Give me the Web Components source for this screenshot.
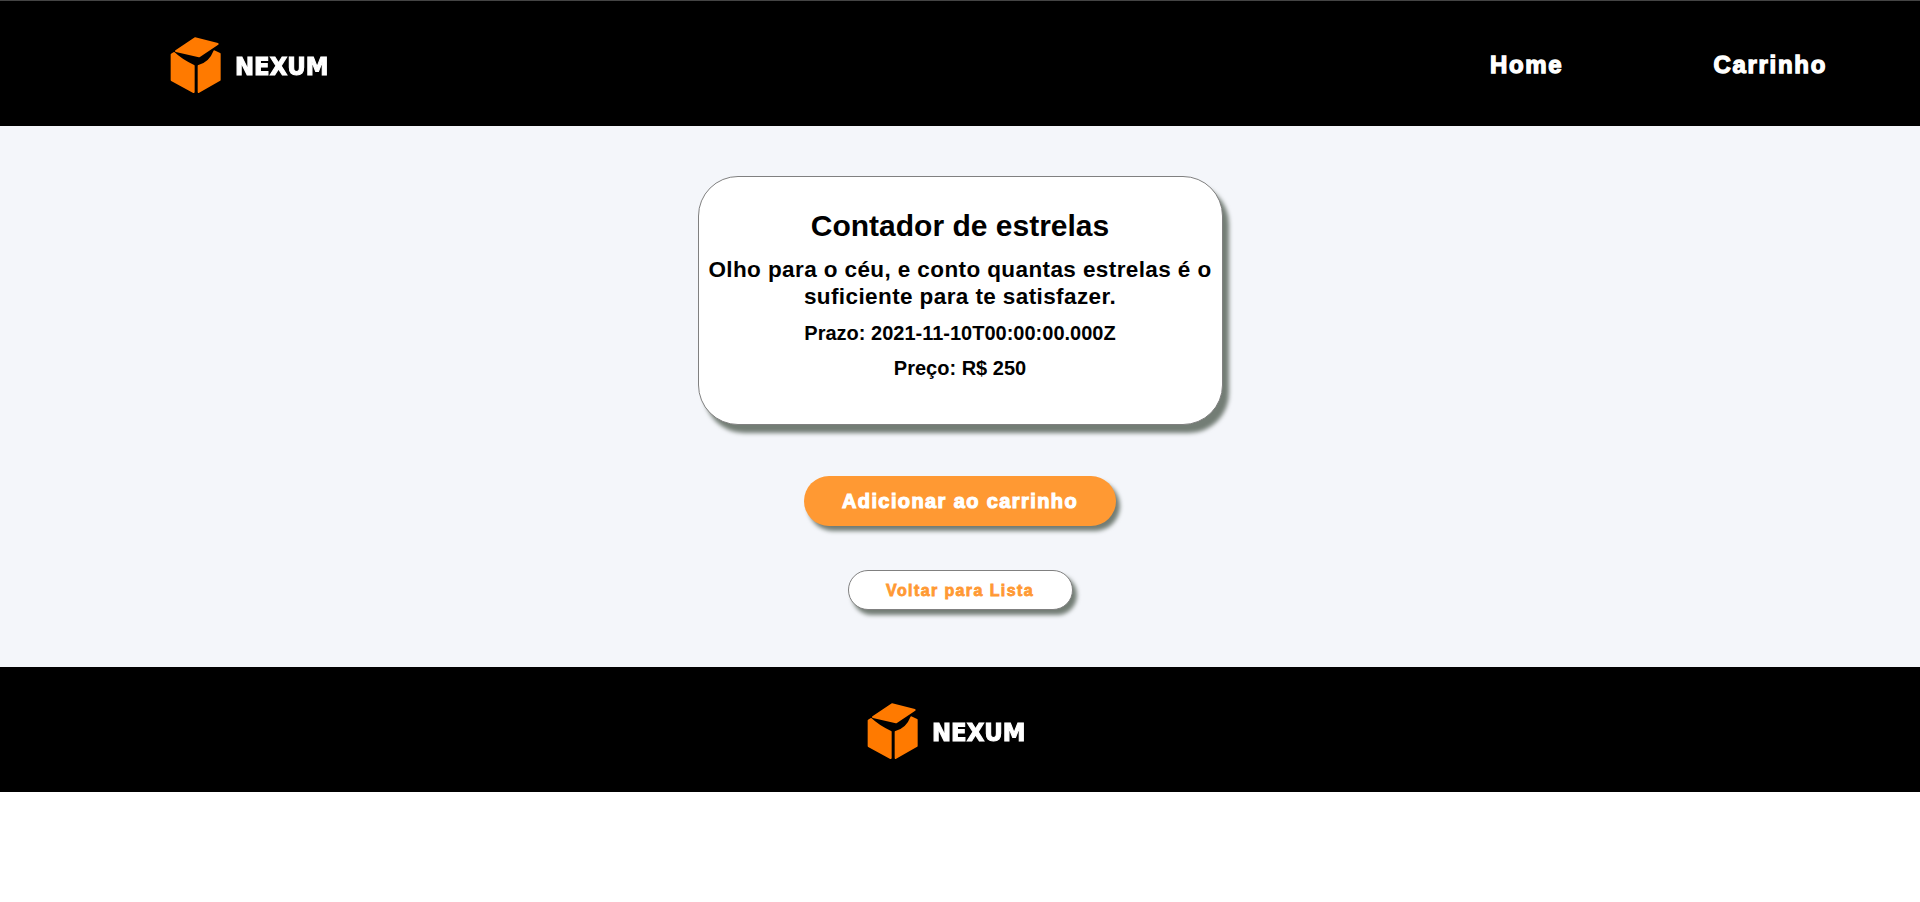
<!DOCTYPE html>
<html lang="pt-BR">
<head>
<meta charset="utf-8">
<title>Nexum</title>
<style>
  html, body { margin: 0; background: #fff; font-family: "Liberation Sans", Arial, sans-serif; }
</style>
</head>
<body>
<site-header>
  <nav-link>Home</nav-link>
  <nav-link>Carrinho</nav-link>
</site-header>
<detail-page>
  <product-card>
    <span slot="title">Contador de estrelas</span>
    <span slot="description">Olho para o céu, e conto quantas estrelas é o suficiente para te satisfazer.</span>
    <span slot="deadline">Prazo: 2021-11-10T00:00:00.000Z</span>
    <span slot="price">Preço: R$ 250</span>
  </product-card>
  <pill-button variant="primary">Adicionar ao carrinho</pill-button>
  <pill-button variant="secondary">Voltar para Lista</pill-button>
</detail-page>
<site-footer></site-footer>

<script>
class NexumLogo extends HTMLElement {
  constructor() {
    super();
    this.attachShadow({ mode: 'open' });
  }

  connectedCallback() {
    this.shadowRoot.innerHTML = `
      <style>
        :host { display: flex; align-items: center; width: 162px; height: 70px; }
        svg { display: block; width: 70px; height: 70px; flex: none; }
        span {
          font: 700 24px/1 "DejaVu Sans", sans-serif;
          color: #fff;
          -webkit-text-stroke: 1.1px #fff;
          filter: blur(0.4px);
          transform: scaleX(0.95);
          transform-origin: left center;
          margin-top: 4px;
        }
      </style>
      <svg viewBox="0 0 210 210" aria-hidden="true">
        <path fill="#ff7a00" stroke="#ff7a00" stroke-width="6" stroke-linejoin="round"
          d="M90 25 L158 42 L102 79 L33 63 Z"/>
        <path fill="#ff7a00" stroke="#ff7a00" stroke-width="6" stroke-linejoin="round"
          d="M20 74 L27 69 C42 84 66 98 86 108 L86 186 L20 150 Z"/>
        <path fill="#ff7a00" stroke="#ff7a00" stroke-width="6" stroke-linejoin="round"
          d="M101 108 C122 102 140 86 148 64 L164 72 L164 150 L101 186 Z"/>
      </svg>
      <span>NEXUM</span>
    `;
  }
}

class NavLink extends HTMLElement {
  constructor() {
    super();
    this.attachShadow({ mode: 'open' });
    this.shadowRoot.innerHTML = `
      <style>
        :host {
          display: block;
          font: 900 24px/1 "Liberation Sans", Arial, sans-serif;
          color: #fff;
          -webkit-text-stroke: 1.3px #fff;
          letter-spacing: 1.7px;
          cursor: pointer;
        }
      </style>
      <slot></slot>
    `;
  }
}

class SiteHeader extends HTMLElement {
  constructor() {
    super();
    this.attachShadow({ mode: 'open' });
    this.shadowRoot.innerHTML = `
      <style>
        :host {
          display: flex;
          align-items: center;
          justify-content: space-between;
          box-sizing: border-box;
          height: 126px;
          padding: 2px 93px 0 165px;
          background: #000;
          border-top: 1px solid #444;
        }
        nav { display: flex; gap: 150px; align-items: center; }
      </style>
      <nexum-logo></nexum-logo>
      <nav><slot></slot></nav>
    `;
  }
}

class SiteFooter extends HTMLElement {
  constructor() {
    super();
    this.attachShadow({ mode: 'open' });
    this.shadowRoot.innerHTML = `
      <style>
        :host {
          display: flex;
          align-items: center;
          justify-content: center;
          box-sizing: border-box;
          height: 125px;
          padding: 2px 34px 0 0;
          background: #000;
        }
      </style>
      <nexum-logo></nexum-logo>
    `;
  }
}

class DetailPage extends HTMLElement {
  constructor() {
    super();
    this.attachShadow({ mode: 'open' });
    this.shadowRoot.innerHTML = `
      <style>
        :host {
          display: flex;
          flex-direction: column;
          align-items: center;
          box-sizing: border-box;
          height: 541px;
          padding-top: 50px;
          background: #f4f6fa;
        }
        ::slotted(pill-button[variant="primary"]) { margin-top: 51px; }
        ::slotted(pill-button[variant="secondary"]) { margin-top: 44px; }
      </style>
      <slot></slot>
    `;
  }
}

class ProductCard extends HTMLElement {
  constructor() {
    super();
    this.attachShadow({ mode: 'open' });
    this.shadowRoot.innerHTML = `
      <style>
        :host {
          display: block;
          box-sizing: border-box;
          width: 525px;
          height: 249px;
          padding: 31px 8px 0;
          background: #fff;
          border: 1px solid #808080;
          border-radius: 40px;
          box-shadow: 6px 8px 4px #737d75;
          text-align: center;
          color: #000;
        }
        h2, h3, p { margin: 0; font-weight: 700; }
        h2 { font-size: 30px; line-height: 36px; }
        h3 { font-size: 22.5px; line-height: 27px; margin-top: 12px; letter-spacing: 0.4px; }
        p { font-size: 20px; line-height: 22px; }
        .deadline { margin-top: 12px; }
        .price { margin-top: 13px; }
      </style>
      <h2><slot name="title"></slot></h2>
      <h3><slot name="description"></slot></h3>
      <p class="deadline"><slot name="deadline"></slot></p>
      <p class="price"><slot name="price"></slot></p>
    `;
  }
}

class PillButton extends HTMLElement {
  constructor() {
    super();
    this.attachShadow({ mode: 'open' });
    this.shadowRoot.innerHTML = `
      <style>
        :host {
          display: flex;
          align-items: center;
          justify-content: center;
          box-sizing: border-box;
          font-family: "Liberation Sans", Arial, sans-serif;
          font-weight: 900;
          border-radius: 25px;
          cursor: pointer;
          box-shadow: 4px 5px 4px #737d75;
        }
        :host([variant="primary"]) {
          width: 312px;
          height: 50px;
          padding-top: 1px;
          background: #ff9933;
          color: #fff;
          font-size: 20px;
          -webkit-text-stroke: 1.1px #fff;
          letter-spacing: 1.4px;
        }
        :host([variant="secondary"]) {
          width: 225px;
          height: 40px;
          padding-top: 2px;
          background: #fff;
          color: #ff9933;
          border: 1px solid #808080;
          font-size: 16px;
          -webkit-text-stroke: 0.8px #ff9933;
          letter-spacing: 1.4px;
        }
      </style>
      <slot></slot>
    `;
  }
}

customElements.define('nexum-logo', NexumLogo);
customElements.define('nav-link', NavLink);
customElements.define('site-header', SiteHeader);
customElements.define('site-footer', SiteFooter);
customElements.define('detail-page', DetailPage);
customElements.define('product-card', ProductCard);
customElements.define('pill-button', PillButton);
</script>
</body>
</html>
